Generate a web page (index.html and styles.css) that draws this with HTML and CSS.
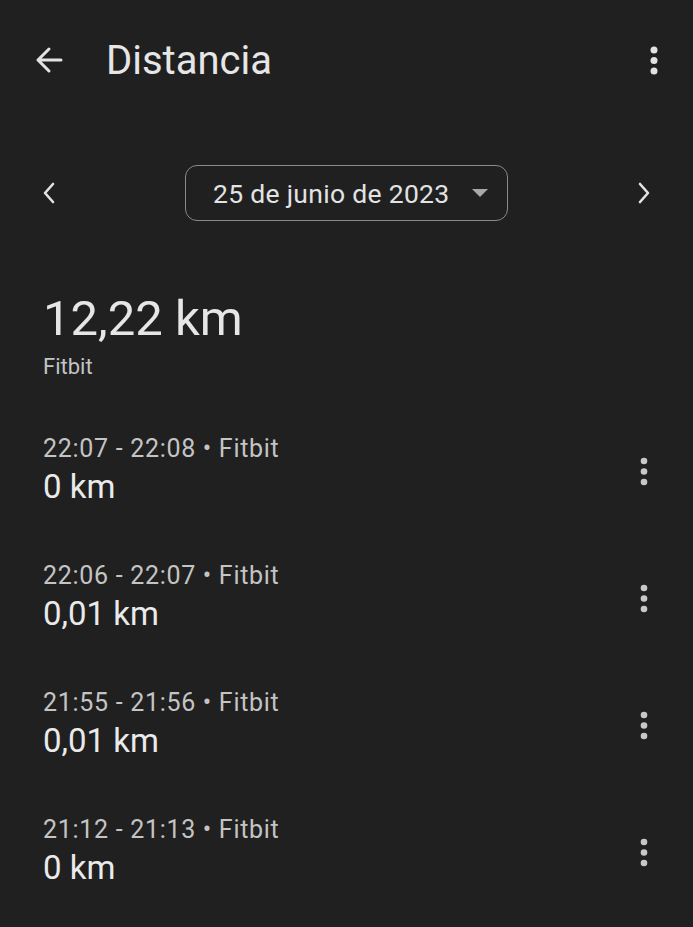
FILE: index.html
```html
<!DOCTYPE html>
<html lang="es">
<head>
<meta charset="utf-8">
<link rel="stylesheet" href="styles.css">
</head>
<body>
<div class="screen">
  <header class="appbar">
    <span class="icon-btn back">
      <svg width="30" height="30" viewBox="0 0 30 30"><path d="M27 15 H4 M15 4 L4 15 L15 26" stroke="#e3e3e3" stroke-width="3" fill="none" stroke-linecap="round" stroke-linejoin="round"/></svg>
    </span>
    <h1 class="title">Distancia</h1>
    <span class="icon-btn kebab">
      <svg width="8" height="29" viewBox="0 0 8 29"><circle cx="4" cy="4" r="3.5" fill="#e3e3e3"/><circle cx="4" cy="14.5" r="3.5" fill="#e3e3e3"/><circle cx="4" cy="25" r="3.5" fill="#e3e3e3"/></svg>
    </span>
  </header>

  <div class="date-row">
    <span class="chev">
      <svg width="14" height="24" viewBox="0 0 14 24"><path d="M11 3 L3 12 L11 21" stroke="#e3e3e3" stroke-width="2.6" fill="none" stroke-linecap="round" stroke-linejoin="round"/></svg>
    </span>
    <div class="date-pill">
      <span class="date-text">25 de junio de 2023</span>
      <svg class="caret" width="16" height="8" viewBox="0 0 16 8"><path d="M0 0 H16 L8 8 Z" fill="#a8a8a8"/></svg>
    </div>
    <span class="chev">
      <svg width="14" height="24" viewBox="0 0 14 24"><path d="M3 3 L11 12 L3 21" stroke="#e3e3e3" stroke-width="2.6" fill="none" stroke-linecap="round" stroke-linejoin="round"/></svg>
    </span>
  </div>

  <section class="summary">
    <div class="total">12,22 km</div>
    <div class="source">Fitbit</div>
  </section>

  <ul class="entries">
    <li class="entry">
      <div class="entry-text">
        <div class="entry-meta">22:07 - 22:08 • Fitbit</div>
        <div class="entry-value">0 km</div>
      </div>
      <span class="entry-menu"><svg width="8" height="29" viewBox="0 0 8 29"><circle cx="4" cy="4" r="3.3" fill="#c8c8c8"/><circle cx="4" cy="14.5" r="3.3" fill="#c8c8c8"/><circle cx="4" cy="25" r="3.3" fill="#c8c8c8"/></svg></span>
    </li>
    <li class="entry">
      <div class="entry-text">
        <div class="entry-meta">22:06 - 22:07 • Fitbit</div>
        <div class="entry-value">0,01 km</div>
      </div>
      <span class="entry-menu"><svg width="8" height="29" viewBox="0 0 8 29"><circle cx="4" cy="4" r="3.3" fill="#c8c8c8"/><circle cx="4" cy="14.5" r="3.3" fill="#c8c8c8"/><circle cx="4" cy="25" r="3.3" fill="#c8c8c8"/></svg></span>
    </li>
    <li class="entry">
      <div class="entry-text">
        <div class="entry-meta">21:55 - 21:56 • Fitbit</div>
        <div class="entry-value">0,01 km</div>
      </div>
      <span class="entry-menu"><svg width="8" height="29" viewBox="0 0 8 29"><circle cx="4" cy="4" r="3.3" fill="#c8c8c8"/><circle cx="4" cy="14.5" r="3.3" fill="#c8c8c8"/><circle cx="4" cy="25" r="3.3" fill="#c8c8c8"/></svg></span>
    </li>
    <li class="entry">
      <div class="entry-text">
        <div class="entry-meta">21:12 - 21:13 • Fitbit</div>
        <div class="entry-value">0 km</div>
      </div>
      <span class="entry-menu"><svg width="8" height="29" viewBox="0 0 8 29"><circle cx="4" cy="4" r="3.3" fill="#c8c8c8"/><circle cx="4" cy="14.5" r="3.3" fill="#c8c8c8"/><circle cx="4" cy="25" r="3.3" fill="#c8c8c8"/></svg></span>
    </li>
  </ul>
</div>
</body>
</html>
```

FILE: styles.css
```css
* { box-sizing: border-box; }
html, body {
  margin: 0;
  padding: 0;
  background: #202020;
}
body {
  font-family: Roboto, "Noto Sans", sans-serif;
  color: #e3e3e3;
}
.screen {
  width: 693px;
  height: 927px;
  overflow: hidden;
  background: #202020;
}
.appbar {
  height: 120px;
  display: flex;
  align-items: center;
  padding: 0 35px 0 34px;
}
.icon-btn {
  display: flex;
  align-items: center;
  justify-content: center;
}
.back { width: 30px; height: 30px; }
.title {
  margin: 0 0 0 42px;
  font-weight: 400;
  font-size: 40px;
  color: #e6e6e6;
  flex: 1;
  letter-spacing: 0;
}
.kebab { width: 8px; height: 29px; }

.date-row {
  display: flex;
  align-items: center;
  justify-content: space-between;
  padding: 0 42px 0 42px;
  margin-top: 45px;
}
.chev { width: 14px; height: 24px; display: flex; }
.date-pill {
  width: 323px;
  height: 56px;
  border: 1.5px solid #8a8a8a;
  border-radius: 12px;
  display: flex;
  align-items: center;
  padding: 0 19px 0 27px;
  justify-content: space-between;
}
.date-text {
  font-size: 26.5px;
  color: #e3e3e3;
  letter-spacing: 0.3px;
}
.caret { display: block; }

.summary {
  padding: 0 43px;
  margin-top: 70px;
}
.total {
  font-size: 49px;
  line-height: 56px;
  color: #e6e6e6;
}
.source {
  font-size: 22px;
  line-height: 28px;
  color: #c4c4c4;
  margin-top: 6px;
}

.entries {
  list-style: none;
  margin: 52px 0 0;
  padding: 0;
}
.entry {
  height: 127px;
  display: flex;
  align-items: flex-start;
  padding: 0 45px 0 43px;
}
.entry-text { flex: 1; }
.entry-meta {
  font-size: 25px;
  line-height: 32px;
  color: #c4c4c4;
  letter-spacing: 0.7px;
}
.entry-value {
  font-size: 33px;
  line-height: 36px;
  color: #eaeaea;
  margin-top: 4px;
}
.entry-menu {
  width: 8px;
  height: 29px;
  margin-top: 24px;
  display: flex;
}
```
